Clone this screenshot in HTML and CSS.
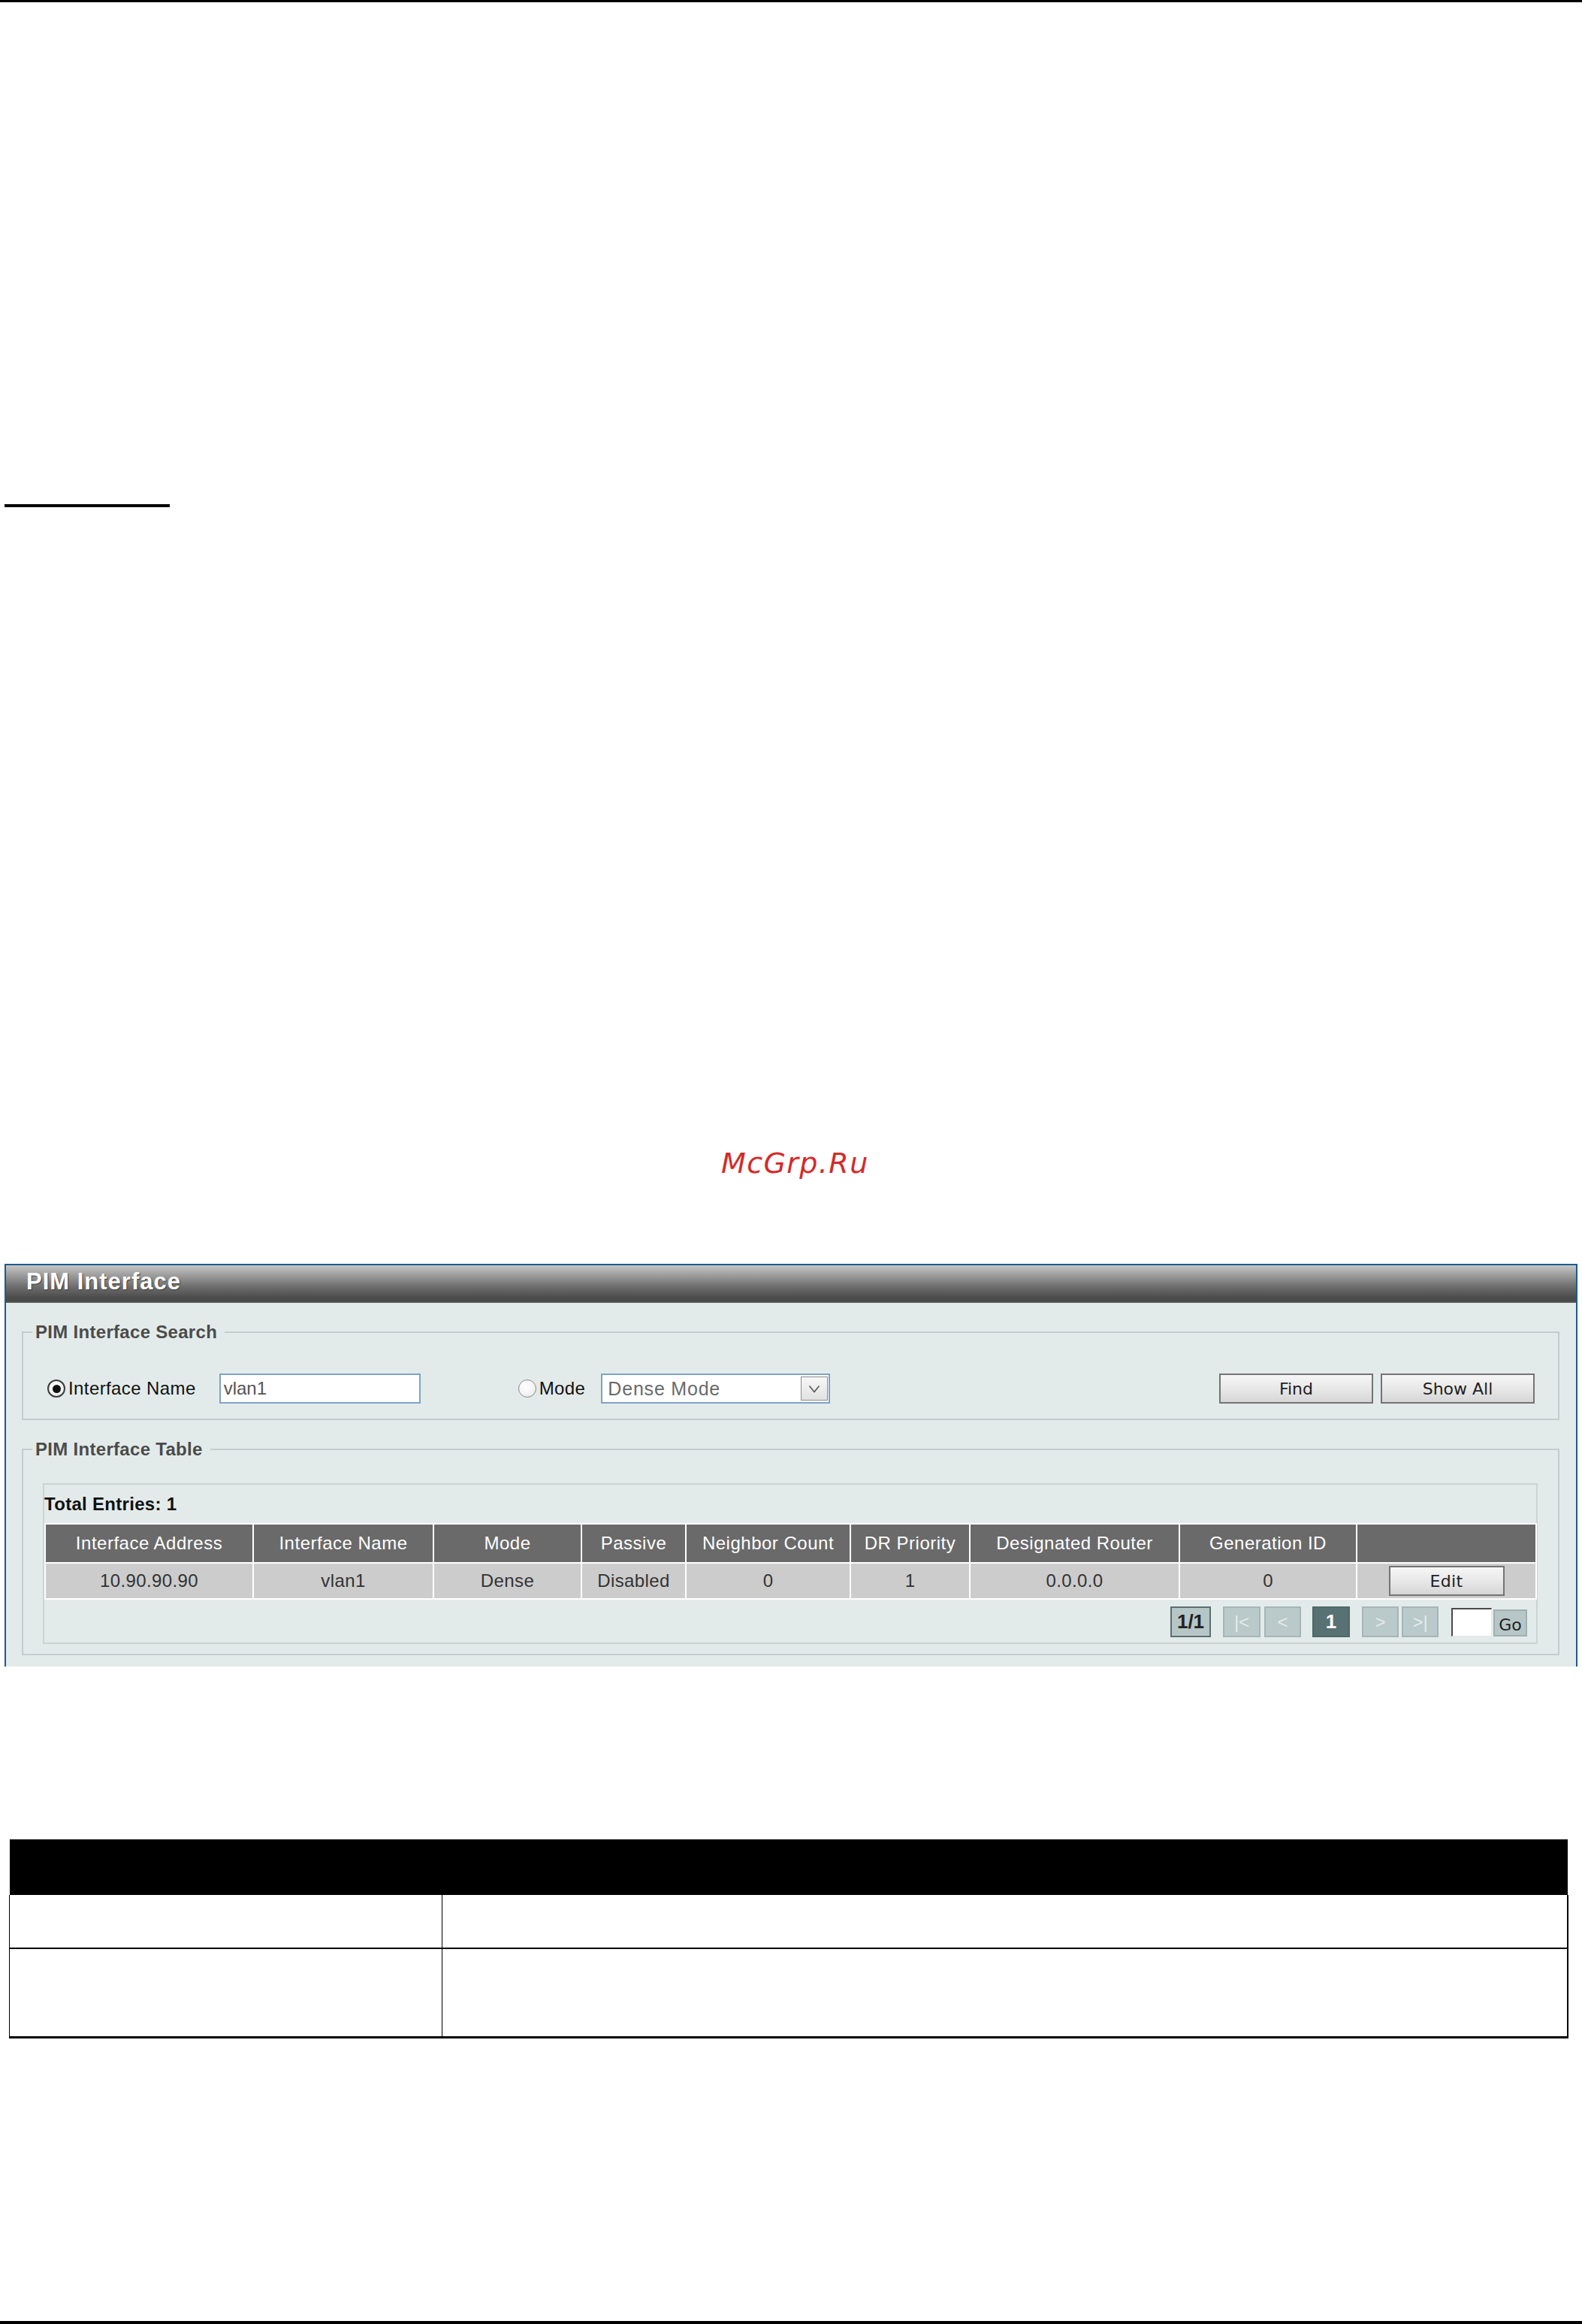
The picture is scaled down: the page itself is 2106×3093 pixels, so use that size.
FILE: index.html
```html
<!DOCTYPE html>
<html>
<head>
<meta charset="utf-8">
<title>PIM Interface</title>
<link rel="stylesheet" href="styles.css">
</head>
<body>
<div class="page">
  <div class="topbar"></div>
  <div class="link-rule"></div>
  <div class="watermark">McGrp.Ru</div>

  <div class="panel">
    <div class="panel-header">PIM Interface</div>
    <div class="panel-body">
      <fieldset class="fs fs-search">
        <legend>PIM Interface Search</legend>
        <div class="search-row">
          <span class="radio checked"></span>
          <span class="label">Interface Name</span>
          <span class="text-input">vlan1</span>
          <span class="radio radio-mode"></span>
          <span class="label">Mode</span>
          <span class="select">
            <span class="select-text">Dense Mode</span>
            <span class="select-arrow"><svg width="16" height="11" viewBox="0 0 16 11"><polyline points="1.5,1.5 8,9.5 14.5,1.5" fill="none" stroke="#555" stroke-width="1.6"/></svg></span>
          </span>
          <span class="btn btn-find">Find</span>
          <span class="btn btn-showall">Show All</span>
        </div>
      </fieldset>

      <fieldset class="fs fs-table">
        <legend>PIM Interface Table</legend>
        <div class="table-box">
          <div class="total">Total Entries: 1</div>
          <table class="data">
            <colgroup>
              <col style="width:275px"><col style="width:238px"><col style="width:195px"><col style="width:137px"><col style="width:217px"><col style="width:157px"><col style="width:277px"><col style="width:234px"><col style="width:237px">
            </colgroup>
            <thead>
              <tr>
                <th>Interface Address</th>
                <th>Interface Name</th>
                <th>Mode</th>
                <th>Passive</th>
                <th>Neighbor Count</th>
                <th>DR Priority</th>
                <th>Designated Router</th>
                <th>Generation ID</th>
                <th></th>
              </tr>
            </thead>
            <tbody>
              <tr>
                <td>10.90.90.90</td>
                <td>vlan1</td>
                <td>Dense</td>
                <td>Disabled</td>
                <td>0</td>
                <td>1</td>
                <td>0.0.0.0</td>
                <td>0</td>
                <td><span class="btn btn-edit">Edit</span></td>
              </tr>
            </tbody>
          </table>
          <div class="pager">
            <span class="pg pg-total">1/1</span>
            <span class="pg pg-dis pg-first">|&lt;</span>
            <span class="pg pg-dis pg-prev">&lt;</span>
            <span class="pg pg-cur">1</span>
            <span class="pg pg-dis pg-next">&gt;</span>
            <span class="pg pg-dis pg-last">&gt;|</span>
            <span class="pg-input"></span>
            <span class="pg-go">Go</span>
          </div>
        </div>
      </fieldset>
    </div>
  </div>

  <table class="doc-table">
    <colgroup><col class="doc-c1"><col class="doc-c2"></colgroup>
    <thead><tr><th></th><th></th></tr></thead>
    <tbody>
      <tr class="doc-r1"><td class="doc-l"></td><td class="doc-r"></td></tr>
      <tr class="doc-r2"><td class="doc-l"></td><td class="doc-r"></td></tr>
    </tbody>
  </table>

  <div class="bottombar"></div>
</div>
</body>
</html>
```

FILE: styles.css
```css
* { box-sizing: border-box; }
html, body { margin: 0; padding: 0; background: #fff; }
body { font-family: "Liberation Sans", Arial, sans-serif; color: #111; }

.page {
  width: 2106px;
  height: 3093px;
  display: flex;
  flex-direction: column;
  align-items: flex-start;
  overflow: hidden;
}

.topbar { flex: none; width: 2106px; height: 3px; background: #000; }

.link-rule { flex: none; margin-top: 668px; margin-left: 6px; width: 220px; height: 4px; background: #000; }

.watermark {
  flex: none;
  margin-top: 854px;
  padding-left: 960px;
  height: 38px;
  font-family: "DejaVu Sans", sans-serif;
  font-style: oblique;
  font-size: 38px;
  line-height: 38px;
  letter-spacing: 1.4px;
  color: #d42a2a;
  white-space: nowrap;
}

/* ---------- panel ---------- */
.panel {
  flex: none;
  margin-top: 115px;
  margin-left: 6px;
  width: 2094px;
  border: 2px solid #1b5c8e;
  border-bottom: none;
  background: #e3ebea;
}

.panel-header {
  height: 50px;
  line-height: 44px;
  padding-left: 27px;
  background: linear-gradient(to bottom, #c6c6c6 0%, #a4a4a4 22%, #707070 55%, #4d4d4d 85%, #4a4a4a 96%, #6a6a6a 100%);
  color: #fff;
  font-weight: bold;
  font-size: 31px;
  letter-spacing: 1px;
  text-shadow: 1px 1px 1px #3a3a3a;
}

.panel-body { padding: 28px 22px 15px 21px; }

.fs {
  margin: 0;
  padding: 0;
  min-width: 0;
  border: 2px solid #c3cdcd;
}
.fs legend {
  margin-left: 12px;
  padding: 0 10px 0 4px;
  font-weight: bold;
  font-size: 24px;
  line-height: 22px;
  letter-spacing: 0.3px;
  color: #4b4b4b;
}

.fs-search { padding-bottom: 20px; }
.fs-table { margin-top: 28px; padding-bottom: 13px; }

/* ---------- search row ---------- */
.search-row {
  margin-top: 44px;
  height: 40px;
  padding: 0 31px 0 32px;
  display: flex;
  align-items: center;
}

.radio {
  flex: none;
  width: 24px;
  height: 24px;
  border-radius: 50%;
  border: 1.5px solid #8a8a8a;
  background: radial-gradient(circle at 40% 35%, #ffffff 0%, #f2f2f2 60%, #dcdcdc 100%);
  display: flex;
  align-items: center;
  justify-content: center;
}
.radio.checked { border: 2px solid #3c3c3c; }
.radio.checked::after {
  content: "";
  width: 11px;
  height: 11px;
  border-radius: 50%;
  background: #111;
}
.radio-mode { margin-left: 130px; }

.label {
  flex: none;
  margin-left: 4px;
  font-size: 24px;
  letter-spacing: 0.4px;
  color: #111;
  white-space: nowrap;
}

.text-input {
  flex: none;
  margin-left: 31px;
  width: 268px;
  height: 40px;
  border: 2px solid #7ea3c8;
  background: #fff;
  padding-left: 4px;
  font-size: 24px;
  line-height: 36px;
  color: #555;
}

.select {
  flex: none;
  margin-left: 21px;
  width: 305px;
  height: 40px;
  border: 2px solid #7ea3c8;
  background: #fff;
  display: flex;
  align-items: center;
  justify-content: space-between;
  padding: 0 1px 0 7px;
}
.select-text {
  font-size: 25px;
  letter-spacing: 0.8px;
  color: #6a6a6a;
}
.select-arrow {
  width: 36px;
  height: 32px;
  border: 1.5px solid #8c8c8c;
  background: linear-gradient(to bottom, #f7f7f7, #e2e2e2);
  display: flex;
  align-items: center;
  justify-content: center;
}

.btn {
  flex: none;
  display: inline-flex;
  align-items: center;
  justify-content: center;
  font-family: "DejaVu Sans", "Liberation Sans", sans-serif;
  font-size: 22px;
  color: #222;
  border: 2px solid #747474;
  background: linear-gradient(to bottom, #f6f6f6 0%, #e8e8e8 50%, #d6d6d6 100%);
}
.btn-find { margin-left: auto; width: 205px; height: 40px; }
.btn-showall { margin-left: 10px; width: 205px; height: 40px; }
.btn-edit { width: 154px; height: 40px; }

/* ---------- table ---------- */
.table-box {
  margin: 34px 27px 0 26px;
  border: 2px solid #cbd3d3;
  padding: 11px 0 0 0;
}
.total {
  height: 30px;
  line-height: 30px;
  font-weight: bold;
  font-size: 24px;
  letter-spacing: 0.3px;
  color: #111;
}

.data {
  margin-top: 10px;
  width: 100%;
  table-layout: fixed;
  border-collapse: separate;
  border-spacing: 2px;
  background: #fff;
}
.data th {
  height: 50px;
  padding: 0;
  background: #6a6a6a;
  color: #fff;
  font-weight: normal;
  font-size: 24px;
  letter-spacing: 0.5px;
  text-align: center;
  white-space: nowrap;
}
.data td {
  height: 46px;
  padding: 0;
  background: #cccccc;
  color: #333;
  font-size: 24px;
  letter-spacing: 0.4px;
  text-align: center;
  vertical-align: middle;
}
.data td .btn-edit { vertical-align: middle; }

.pager {
  height: 57px;
  padding: 9px 12px 7px 0;
  display: flex;
  justify-content: flex-end;
  align-items: flex-end;
}
.pg {
  flex: none;
  height: 41px;
  display: flex;
  align-items: center;
  justify-content: center;
  border: 2px solid #a6b6b6;
  background: #bac9c9;
  font-size: 24px;
}
.pg-total {
  width: 54px;
  border-color: #5b6f6f;
  background: #b6c6c6;
  color: #222;
  font-weight: bold;
  font-size: 26px;
}
.pg-dis { color: #e4ecec; }
.pg-first { margin-left: 16px; width: 50px; }
.pg-prev { margin-left: 5px; width: 49px; }
.pg-cur {
  margin-left: 15px;
  width: 50px;
  border-color: #4f6768;
  background: #587173;
  color: #fff;
  font-weight: bold;
  font-size: 26px;
}
.pg-next { margin-left: 16px; width: 49px; }
.pg-last { margin-left: 4px; width: 49px; }
.pg-input {
  flex: none;
  margin-left: 17px;
  width: 54px;
  height: 38px;
  margin-bottom: 1px;
  background: #fff;
  border-top: 2px solid #4a4a4a;
  border-left: 2px solid #4a4a4a;
  border-right: 1px solid #e8e8e8;
  border-bottom: 1px solid #e8e8e8;
}
.pg-go {
  flex: none;
  margin-left: 2px;
  margin-bottom: 1px;
  width: 45px;
  height: 36px;
  border: 2px solid #a0b1b1;
  background: #b7c7c7;
  display: flex;
  align-items: flex-end;
  justify-content: center;
  font-family: "DejaVu Sans", "Liberation Sans", sans-serif;
  font-size: 22px;
  line-height: 26px;
  color: #222;
}

/* ---------- doc table ---------- */
.doc-table {
  flex: none;
  margin-top: 230px;
  margin-left: 12px;
  width: 2074px;
  table-layout: fixed;
  border-collapse: collapse;
}
.doc-c1 { width: 576px; }
.doc-c2 { width: 1498px; }
.doc-table th {
  height: 74px;
  padding: 0;
  background: #000;
  border: none;
}
.doc-table td { padding: 0; }
.doc-l { border-left: 1px solid #000; border-right: 1px solid #000; }
.doc-r { border-right: 2px solid #000; }
.doc-r1 td { height: 71px; border-bottom: 2px solid #000; }
.doc-r2 td { height: 118px; border-bottom: 3px solid #000; }

.bottombar { flex: none; margin-top: auto; width: 2106px; height: 4px; background: #000; }
```
